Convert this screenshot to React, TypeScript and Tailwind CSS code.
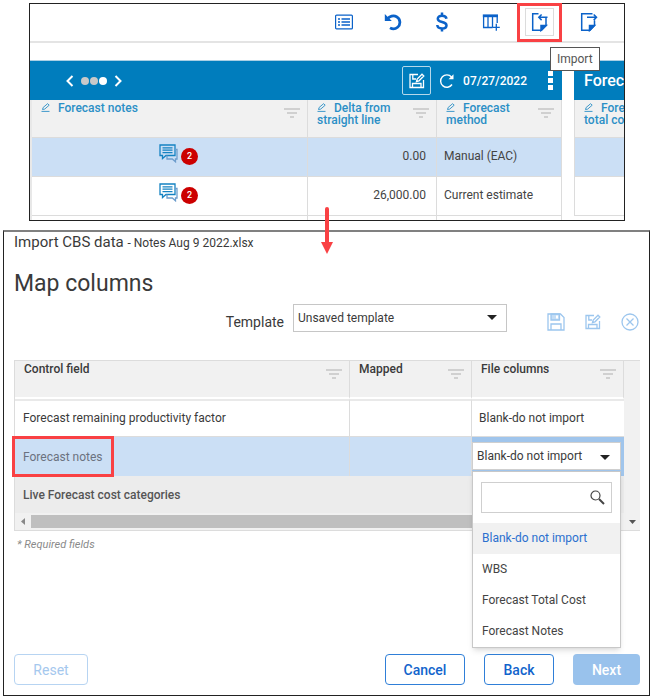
import type { ReactNode } from "react"

function ListIcon() {
  return (
    <svg width="18" height="16" viewBox="0 0 18 16" fill="none" stroke="currentColor">
      <rect x="0.6" y="1.1" width="16.800" height="13.800" rx="1" strokeWidth="1.200" />
      <path d="M3 5h2M3 8h2M3 11h2M6.500 5h8.500M6.500 8h8.500M6.500 11h8.500" strokeWidth="1.400" />
    </svg>
  )
}

function UndoIcon() {
  return (
    <svg width="18" height="18" viewBox="0 0 18 18" fill="none" stroke="currentColor">
      <path d="M3.500 6C5.500 3.200 9.500 2 12.600 3.700c4 2.200 4.300 7.800 1 10.600-2.300 1.900-5.200 2-7.600 0.600" strokeWidth="2.800" />
      <path d="M0.800 1v7h7z" fill="currentColor" stroke="none" />
    </svg>
  )
}

function DollarIcon() {
  return (
    <svg width="12" height="20" viewBox="0 0 12 20" fill="none" stroke="currentColor" strokeWidth="2.500">
      <path d="M10.500 6.800C10.200 4.900 8.600 3.700 6 3.700c-2.500 0-4.200 1.100-4.200 3 0 4.400 8.700 2.200 8.700 6.700 0 2-1.800 3-4.400 3-2.900 0-4.700-1.300-4.800-3.400M6 0.500v3M6 16.500v3" />
    </svg>
  )
}

function ColumnsIcon() {
  return (
    <svg width="18" height="18" viewBox="0 0 18 18" fill="none" stroke="currentColor" strokeWidth="1.300">
      <path d="M0.800 2.800h15.200" strokeWidth="2.800" />
      <path d="M1.600 4v10.500h9M6 4v10.500M10.500 4v10.500M15.200 4v6M10.800 14.300h7M14.300 10.800v7" />
    </svg>
  )
}

function ImportIcon() {
  return (
    <svg width="18" height="20" viewBox="0 0 18 20" fill="none" stroke="currentColor" strokeWidth="1.500">
      <path d="M7.500 1.700H1.700v16.600h8.800l4.500-4.800V5.500M16.500 5.300H8M10.600 2.500L7.800 5.300l2.800 2.800" />
      <path d="M10 18.500v-5h5.200z" fill="currentColor" />
    </svg>
  )
}

function ExportIcon() {
  return (
    <svg width="18" height="20" viewBox="0 0 18 20" fill="none" stroke="currentColor" strokeWidth="1.500">
      <path d="M12.500 1.700H1.700v16.600h8.300l4.500-4.800V8.500M7 5.300h9.500M13.700 2.500l2.800 2.800-2.800 2.800" />
      <path d="M9.500 18.500v-5h5z" fill="currentColor" />
    </svg>
  )
}

function SaveEditIcon() {
  return (
    <svg width="16" height="16" viewBox="0 0 16 16" fill="none" stroke="currentColor" strokeWidth="1.300">
      <path d="M9 1.500H1v13h13.500V7M3.800 1.500V6H7M3.500 14.500v-4h8.500v4M7.500 8.500l0.700-2.500L13 1.200l1.800 1.800L10 7.800z" />
    </svg>
  )
}

function SaveIcon() {
  return (
    <svg width="18" height="18" viewBox="0 0 18 18" fill="none" stroke="currentColor" strokeWidth="1.300">
      <path d="M1 1h12.500L17 4.500V17H1zM4 17v-6h10v6" />
      <path d="M4 1h8.500v6H4z" fill="currentColor" fillOpacity="0.600" />
      <path d="M9 2.500h2v3H9z" fill="#fff" stroke="none" />
    </svg>
  )
}

function CloseIcon() {
  return (
    <svg width="18" height="18" viewBox="0 0 18 18" fill="none" stroke="currentColor" strokeWidth="1.300">
      <circle cx="9" cy="9" r="8" />
      <path d="M5.500 5.500l7 7M12.500 5.500l-7 7" />
    </svg>
  )
}

function RefreshIcon() {
  return (
    <svg width="16" height="16" viewBox="0 0 16 16" fill="none" stroke="currentColor" strokeWidth="1.400">
      <path d="M13 11.500A6.200 6.200 0 1 1 12.500 4" />
      <path d="M14.500 1.300v5H9.500z" fill="currentColor" stroke="none" />
    </svg>
  )
}

function PencilIcon() {
  return (
    <svg className="mr-[7px] inline-block align-baseline" width="10" height="9" viewBox="0 0 10 9" fill="none" stroke="currentColor" strokeWidth="0.900">
      <path d="M1.500 6.500l0.600-2L6.600 0.700l1.600 1.500-4.500 3.900zM0.500 8.400h8" />
    </svg>
  )
}

function FilterIcon() {
  return (
    <svg width="16" height="10" viewBox="0 0 16 10" fill="#d0d0d0">
      <path d="M0 0h16v2H0zM3 4h10v2H3zM6 8h4v2H6z" />
    </svg>
  )
}

function NotesIcon() {
  return (
    <svg width="19" height="19" viewBox="0 0 19 19" fill="none" stroke="#1482c2" strokeWidth="1.300">
      <path d="M1 1h15v10.500H7L3.500 14.500v-3H1z" />
      <path d="M3.500 3.800h10M3.500 6.200h10M3.500 8.600h10" />
      <path d="M16 5.500h2v9.500h-1.500v2.800L13.300 15H8v-3.500" stroke="#6d9dcc" />
    </svg>
  )
}

function ChevronIcon({ flip = false }: { flip?: boolean }) {
  return (
    <svg width="8" height="12" viewBox="0 0 8 12" fill="none" stroke="currentColor" strokeWidth="2">
      <path d={flip ? "M1.500 1l5 5-5 5" : "M6.500 1l-5 5 5 5"} />
    </svg>
  )
}

function Caret() {
  return (
    <svg width="10" height="5" viewBox="0 0 10 5" fill="#222">
      <path d="M0 0h10L5 5z" />
    </svg>
  )
}

function SearchIcon() {
  return (
    <svg width="15" height="15" viewBox="0 0 15 15" fill="none" stroke="#444">
      <circle cx="5.500" cy="5.500" r="4.500" strokeWidth="1.200" />
      <path d="M9 9l5 5" strokeWidth="2" />
    </svg>
  )
}

function ToolButton({ label, children }: { label: string; children: ReactNode }) {
  return (
    <button aria-label={label} className="flex h-7 w-[29px] items-center justify-center">
      {children}
    </button>
  )
}

function ForecastHeader({ children, filter = true }: { children: ReactNode; filter?: boolean }) {
  return (
    <th className="border-r border-b border-[#dcdcdc] p-0 text-left align-top font-medium">
      <div className="flex justify-between pt-[2px] pr-[7px] pl-[9px]">
        <div>
          <PencilIcon />
          {children}
        </div>
        {filter && <div className="pt-1.5"><FilterIcon /></div>}
      </div>
    </th>
  )
}

function NotesCell() {
  return (
    <td className="border-r border-b border-[#dcdcdc] p-0 pb-[2px]">
      <div className="flex items-center justify-center gap-[3px] pl-[18px]">
        <span className="pb-1.5"><NotesIcon /></span>
        <span className="flex size-[17px] items-center justify-center rounded-full bg-[#cc0000] text-[9px] font-medium text-white">2</span>
      </div>
    </td>
  )
}

function ForecastPanel() {
  return (
    <section className="border border-[#222]">
      <div className="flex h-[39px] items-center justify-end gap-5 border-b-2 border-[#e4e4e4] pr-[21px] pb-px text-[#0b62c9]">
        <ToolButton label="List"><ListIcon /></ToolButton>
        <ToolButton label="Undo"><UndoIcon /></ToolButton>
        <ToolButton label="Currency"><DollarIcon /></ToolButton>
        <ToolButton label="Add column"><ColumnsIcon /></ToolButton>
        <div className="relative">
          <button aria-label="Import data" className="flex h-7 w-[29px] items-center justify-center border border-[#dcdcdc]">
            <ImportIcon />
          </button>
          <div className="pointer-events-none absolute -inset-x-2 -top-[5px] -bottom-1.5 border-3 border-[#f94144]" />
          <div role="tooltip" className="absolute top-[39px] left-[25px] z-10 border border-[#555] bg-white px-1.5 text-xs leading-[22px] text-[#555]">
            Import
          </div>
        </div>
        <ToolButton label="Export"><ExportIcon /></ToolButton>
      </div>

      <div className="flex gap-3 pt-[17px]">
        <div className="min-w-0 flex-1 border-t border-[#a9cfe4]">
          <div className="flex h-[39px] items-center bg-[#007dbd] pr-[9px] pl-9 text-white">
            <button aria-label="Previous"><ChevronIcon /></button>
            <div className="flex gap-px px-[7px]">
              <span className="size-2 rounded-full bg-[#c9c9c9]" />
              <span className="size-2 rounded-full bg-[#c9c9c9]" />
              <span className="size-2 rounded-full bg-white" />
            </div>
            <button aria-label="Next period"><ChevronIcon flip /></button>
            <div className="ml-auto flex items-center">
              <button aria-label="Save as" className="mr-2 flex size-[29px] items-center justify-center rounded-xs border border-[#b5d8ea]">
                <SaveEditIcon />
              </button>
              <button aria-label="Refresh"><RefreshIcon /></button>
              <span className="mr-[21px] ml-2 text-xs font-medium">07/27/2022</span>
              <button aria-label="More" className="flex flex-col gap-[2px]">
                <span className="size-[5px] bg-white" />
                <span className="size-[5px] bg-white" />
                <span className="size-[5px] bg-white" />
              </button>
            </div>
          </div>
          <table className="w-full table-fixed border-separate border-spacing-0 border-l-2 border-[#e8e8e8] text-xs text-[#444]">
            <colgroup>
              <col />
              <col className="w-[129px]" />
              <col className="w-[125px]" />
            </colgroup>
            <thead>
              <tr className="h-[38px] bg-[#f1f1f1] leading-3 text-[#2b8fc6]">
                <ForecastHeader>Forecast notes</ForecastHeader>
                <ForecastHeader>Delta from<br />straight line</ForecastHeader>
                <ForecastHeader>Forecast<br />method</ForecastHeader>
              </tr>
            </thead>
            <tbody>
              <tr className="h-[39px] bg-[#cbdff5]">
                <NotesCell />
                <td className="border-r border-b border-[#dcdcdc] p-0 pr-2.5 pb-[2px] text-right">0.00</td>
                <td className="border-r border-b border-[#dcdcdc] p-0 pb-[2px] pl-[7px]">Manual (EAC)</td>
              </tr>
              <tr className="h-[39px]">
                <NotesCell />
                <td className="border-r border-b border-[#dcdcdc] p-0 pr-2.5 pb-[2px] text-right">26,000.00</td>
                <td className="border-r border-b border-[#dcdcdc] p-0 pb-[2px] pl-[7px]">Current estimate</td>
              </tr>
              <tr className="h-1">
                <td className="border-r border-[#dcdcdc] p-0" />
                <td className="border-r border-[#dcdcdc] p-0" />
                <td className="border-r border-[#dcdcdc] p-0" />
              </tr>
            </tbody>
          </table>
        </div>

        <div className="w-[50px] overflow-hidden border-t border-[#a9cfe4] whitespace-nowrap">
          <div className="flex h-[39px] items-center bg-[#007dbd] pl-2.5 text-base font-medium text-white">Forecast</div>
          <table className="w-[120px] border-separate border-spacing-0 border-l border-[#dcdcdc] text-xs">
            <thead>
              <tr className="h-[38px] bg-[#f1f1f1] leading-3 text-[#2b8fc6]">
                <ForecastHeader filter={false}>Forecast<br />total cost</ForecastHeader>
              </tr>
            </thead>
            <tbody>
              <tr className="h-[39px] bg-[#cbdff5]"><td className="border-b border-[#dcdcdc]" /></tr>
              <tr className="h-[39px]"><td className="border-b border-[#dcdcdc]" /></tr>
            </tbody>
          </table>
        </div>
      </div>
    </section>
  )
}

function MapHeader({ children }: { children: ReactNode }) {
  return (
    <th className="border-r border-b-2 border-[#dcdcdc] border-b-white p-0 text-left align-top font-medium">
      <div className="flex justify-between pr-[7px] pl-[9px]">
        <span>{children}</span>
        <span className="pt-2"><FilterIcon /></span>
      </div>
    </th>
  )
}

const fileColumns = ["Blank-do not import", "WBS", "Forecast Total Cost", "Forecast Notes"]

function ColumnPicker() {
  return (
    <div className="relative h-[39px] bg-[#a0c5ec] pt-[5px] pr-[3px]">
      <select aria-label="File column" className="h-7 w-full appearance-none border border-[#cfcfcf] bg-white px-1 text-xs">
        <option>Blank-do not import</option>
      </select>
      <span className="pointer-events-none absolute top-[18px] right-3.5"><Caret /></span>
      <div className="absolute top-[34px] right-[3px] left-0 z-10 border border-[#c8c8c8] bg-white pt-[10px] shadow-md">
        <div className="relative mx-2 mb-2.5">
          <input aria-label="Search columns" className="h-[31px] w-full border border-[#cfcfcf] px-2 text-xs" />
          <span className="pointer-events-none absolute top-2 right-[7px]"><SearchIcon /></span>
        </div>
        {fileColumns.map((name, i) => (
          <button key={name} className={`block h-[31px] w-full px-[9px] pb-[2px] text-left text-xs ${i === 0 ? "bg-[#f1f1f1] text-[#2b70cf]" : "text-[#444]"}`}>
            {name}
          </button>
        ))}
      </div>
    </div>
  )
}

function MapTable() {
  return (
    <div className="flex border border-r-0 border-[#dcdcdc]">
      <div className="min-w-0 flex-1">
        <table className="w-full table-fixed border-separate border-spacing-0 text-xs text-[#3a3a3a]">
          <colgroup>
            <col />
            <col className="w-[122px]" />
            <col className="w-[152px]" />
          </colgroup>
          <thead>
            <tr className="h-[38px] bg-[#f1f1f1]">
              <MapHeader>Control field</MapHeader>
              <MapHeader>Mapped</MapHeader>
              <MapHeader>File columns</MapHeader>
            </tr>
          </thead>
          <tbody>
            <tr className="h-[38px]">
              <td className="border-t-2 border-r border-b border-[#dcdcdc] border-t-[#e9e9e9] p-0 pb-[2px] pl-2">Forecast remaining productivity factor</td>
              <td className="border-t-2 border-r border-b border-[#dcdcdc] border-t-[#e9e9e9] p-0" />
              <td className="border-t-2 border-b border-[#dcdcdc] border-t-[#e9e9e9] p-0 pb-[2px] pl-[7px]">Blank-do not import</td>
            </tr>
            <tr className="h-[39px] bg-[#cbdff5]">
              <td className="relative border-r border-[#dcdcdc] p-0 pl-2 text-[#6b7280]">
                Forecast notes
                <div className="pointer-events-none absolute -top-px -left-[3px] h-[41px] w-[102px] border-3 border-[#f94144]" />
              </td>
              <td className="border-r border-[#dcdcdc] p-0" />
              <td className="p-0"><ColumnPicker /></td>
            </tr>
            <tr className="h-[37px] bg-[#ececec]">
              <td colSpan={3} className="p-0 pl-2 font-medium text-[#555]">Live Forecast cost categories</td>
            </tr>
          </tbody>
        </table>
        <div className="flex h-[17px] items-center gap-1.5 bg-[#f1f1f1] pr-4 pl-1.5">
          <svg width="4" height="7" viewBox="0 0 4 7" fill="#888"><path d="M4 0v7L0 3.500z" /></svg>
          <div className="h-[13px] flex-1 bg-[#bfbfbf]" />
        </div>
      </div>
      <div className="flex w-4 items-end justify-center bg-[#f1f1f1] pb-1.5">
        <svg width="7" height="4" viewBox="0 0 7 4" fill="#555"><path d="M0 0h7L3.500 4z" /></svg>
      </div>
    </div>
  )
}

function ImportDialog() {
  return (
    <section className="border border-t-2 border-[#222] border-t-[#808080] pr-[9px] pb-[10px] pl-[10px] text-[#3a3a3a]">
      <h1 className="text-[15px] leading-5">
        Import CBS data <span className="text-xs">- Notes Aug 9 2022.xlsx</span>
      </h1>
      <h2 className="pt-4 text-[23px] leading-8">Map columns</h2>
      <div className="flex items-center pt-1">
        <label htmlFor="template" className="ml-auto pt-[7px] text-sm">Template</label>
        <div className="relative ml-[9px] w-[214px]">
          <select id="template" className="h-7 w-full appearance-none border border-[#c6c6c6] px-1 text-xs">
            <option>Unsaved template</option>
          </select>
          <span className="pointer-events-none absolute top-[11px] right-2.5"><Caret /></span>
        </div>
        <div className="flex items-center gap-5 pt-2 pr-px pl-10 text-[#9cc6ee]">
          <button aria-label="Save template"><SaveIcon /></button>
          <button aria-label="Save template as"><SaveEditIcon /></button>
          <button aria-label="Delete template"><CloseIcon /></button>
        </div>
      </div>
      <div className="pt-7">
        <MapTable />
      </div>
      <p className="pt-1.5 pl-[3px] text-[11px] leading-4 text-[#8a8a8a] italic">* Required fields</p>
      <div className="flex pt-[101px] text-sm text-[#1264cc]">
        <button className="h-[31px] w-[74px] rounded-sm border border-[#b7d4f2] text-[#a5c8ee]">Reset</button>
        <button className="ml-auto h-[31px] w-[80px] rounded-sm border border-[#2f7fd8] font-medium">Cancel</button>
        <button className="ml-[19px] h-[31px] w-[70px] rounded-sm border border-[#2f7fd8] font-medium">Back</button>
        <button className="ml-[19px] h-[31px] w-[67px] rounded-sm bg-[#99c2ec] font-medium text-white">Next</button>
      </div>
    </section>
  )
}

export default function App() {
  return (
    <main className="bg-white pt-[3px] font-[Roboto,sans-serif]">
      <div className="pr-[27px] pl-[29px]">
        <ForecastPanel />
      </div>
      <div className="relative h-[9px]">
        <svg className="absolute -top-3.5 left-[321px]" width="12" height="47" viewBox="0 0 12 47" fill="#f94144">
          <rect x="4" y="0" width="4" height="38" rx="2" />
          <path d="M0 35h12L6 47z" />
        </svg>
      </div>
      <div className="pr-[2px] pl-[3px]">
        <ImportDialog />
      </div>
    </main>
  )
}
